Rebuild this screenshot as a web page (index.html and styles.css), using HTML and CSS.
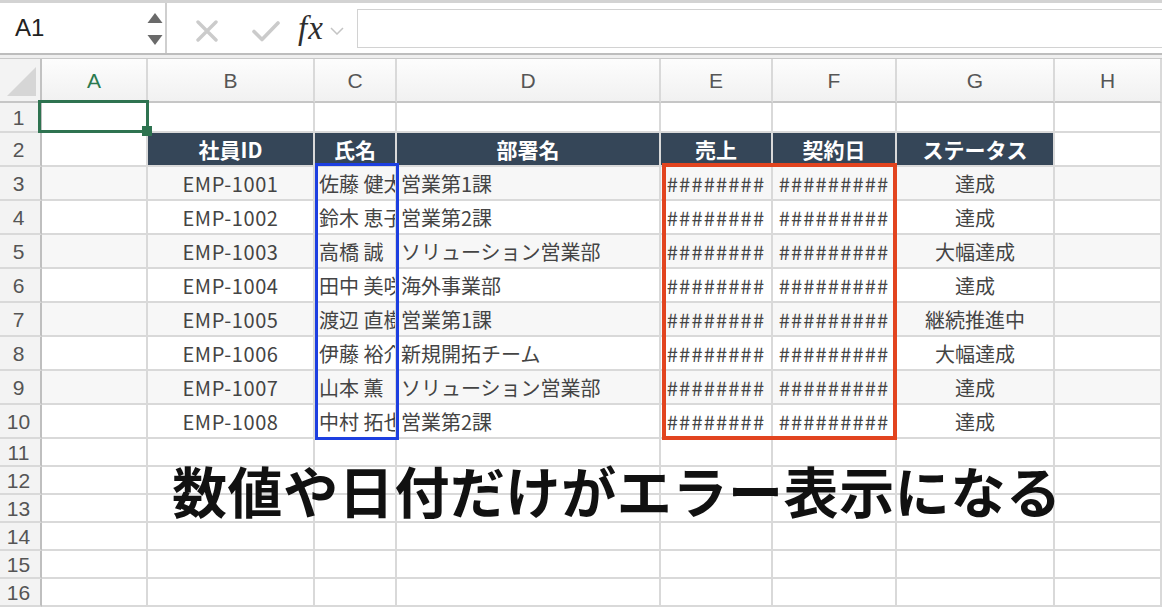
FILE: index.html
```html
<!DOCTYPE html>
<html lang="ja">
<head>
<meta charset="utf-8">
<title>Excel</title>
<link rel="stylesheet" href="styles.css">
</head>
<body>
<div class="page">
  <div class="toolbar">
    <div class="namebox">
      <span class="ref">A1</span>
      <svg class="spin" width="16" height="36" viewBox="0 0 16 36"><polygon points="8,1 15.5,11 0.5,11" fill="#6a6a6a"/><polygon points="0.5,23 15.5,23 8,33" fill="#6a6a6a"/></svg>
    </div>
    <div class="tools">
      <svg class="ico-x" width="22" height="22" viewBox="0 0 22 22"><path d="M2 2 L20 20 M20 2 L2 20" stroke="#cbcbcb" stroke-width="3.4" stroke-linecap="round"/></svg>
      <svg class="ico-ok" width="28" height="22" viewBox="0 0 28 22"><path d="M2 11.5 L10 19.5 L26 3" fill="none" stroke="#cbcbcb" stroke-width="3.6" stroke-linecap="round" stroke-linejoin="round"/></svg>
      <span class="fx">fx</span>
      <svg class="chev" width="14" height="8" viewBox="0 0 14 8"><path d="M1 1 L7 7 L13 1" fill="none" stroke="#c4c4c4" stroke-width="1.5"/></svg>
    </div>
    <div class="formula"></div>
  </div>
  <div class="band"></div>

  <div class="sheet">
    <div class="row h-head">
      <div class="c corner"><svg width="30" height="30" viewBox="0 0 30 30"><polygon points="29,0 29,29 0,29" fill="#d6d6d6"/></svg></div>
      <div class="c ch sel">A</div><div class="c ch">B</div><div class="c ch">C</div><div class="c ch">D</div><div class="c ch">E</div><div class="c ch">F</div><div class="c ch">G</div><div class="c ch">H</div>
    </div>
    <div class="row h30">
      <div class="c rh">1</div><div class="c"></div><div class="c"></div><div class="c"></div><div class="c"></div><div class="c"></div><div class="c"></div><div class="c"></div><div class="c"></div>
    </div>
    <div class="row h34">
      <div class="c rh">2</div><div class="c"></div>
      <div class="c th">社員ID</div><div class="c th">氏名</div><div class="c th">部署名</div><div class="c th">売上</div><div class="c th">契約日</div><div class="c th">ステータス</div>
      <div class="c"></div>
    </div>

    <div class="row h34 odd">
      <div class="c rh">3</div><div class="c"></div>
      <div class="c td ctr id">EMP-1001</div><div class="c td lft">佐藤 健太</div><div class="c td lft">営業第1課</div><div class="c td ctr hash">########</div><div class="c td ctr hash">#########</div><div class="c td ctr">達成</div>
      <div class="c"></div>
    </div>
    <div class="row h34">
      <div class="c rh">4</div><div class="c"></div>
      <div class="c td ctr id">EMP-1002</div><div class="c td lft">鈴木 恵子</div><div class="c td lft">営業第2課</div><div class="c td ctr hash">########</div><div class="c td ctr hash">#########</div><div class="c td ctr">達成</div>
      <div class="c"></div>
    </div>
    <div class="row h34 odd">
      <div class="c rh">5</div><div class="c"></div>
      <div class="c td ctr id">EMP-1003</div><div class="c td lft">高橋 誠</div><div class="c td lft">ソリューション営業部</div><div class="c td ctr hash">########</div><div class="c td ctr hash">#########</div><div class="c td ctr">大幅達成</div>
      <div class="c"></div>
    </div>
    <div class="row h34">
      <div class="c rh">6</div><div class="c"></div>
      <div class="c td ctr id">EMP-1004</div><div class="c td lft">田中 美咲</div><div class="c td lft">海外事業部</div><div class="c td ctr hash">########</div><div class="c td ctr hash">#########</div><div class="c td ctr">達成</div>
      <div class="c"></div>
    </div>
    <div class="row h34 odd">
      <div class="c rh">7</div><div class="c"></div>
      <div class="c td ctr id">EMP-1005</div><div class="c td lft">渡辺 直樹</div><div class="c td lft">営業第1課</div><div class="c td ctr hash">########</div><div class="c td ctr hash">#########</div><div class="c td ctr">継続推進中</div>
      <div class="c"></div>
    </div>
    <div class="row h34">
      <div class="c rh">8</div><div class="c"></div>
      <div class="c td ctr id">EMP-1006</div><div class="c td lft">伊藤 裕介</div><div class="c td lft">新規開拓チーム</div><div class="c td ctr hash">########</div><div class="c td ctr hash">#########</div><div class="c td ctr">大幅達成</div>
      <div class="c"></div>
    </div>
    <div class="row h34 odd">
      <div class="c rh">9</div><div class="c"></div>
      <div class="c td ctr id">EMP-1007</div><div class="c td lft">山本 薫</div><div class="c td lft">ソリューション営業部</div><div class="c td ctr hash">########</div><div class="c td ctr hash">#########</div><div class="c td ctr">達成</div>
      <div class="c"></div>
    </div>
    <div class="row h34">
      <div class="c rh">10</div><div class="c"></div>
      <div class="c td ctr id">EMP-1008</div><div class="c td lft">中村 拓也</div><div class="c td lft">営業第2課</div><div class="c td ctr hash">########</div><div class="c td ctr hash">#########</div><div class="c td ctr">達成</div>
      <div class="c"></div>
    </div>

    <div class="row h28"><div class="c rh">11</div><div class="c"></div><div class="c"></div><div class="c"></div><div class="c"></div><div class="c"></div><div class="c"></div><div class="c"></div><div class="c"></div></div>
    <div class="row h28"><div class="c rh">12</div><div class="c"></div><div class="c"></div><div class="c"></div><div class="c"></div><div class="c"></div><div class="c"></div><div class="c"></div><div class="c"></div></div>
    <div class="row h28"><div class="c rh">13</div><div class="c"></div><div class="c"></div><div class="c"></div><div class="c"></div><div class="c"></div><div class="c"></div><div class="c"></div><div class="c"></div></div>
    <div class="row h28"><div class="c rh">14</div><div class="c"></div><div class="c"></div><div class="c"></div><div class="c"></div><div class="c"></div><div class="c"></div><div class="c"></div><div class="c"></div></div>
    <div class="row h28"><div class="c rh">15</div><div class="c"></div><div class="c"></div><div class="c"></div><div class="c"></div><div class="c"></div><div class="c"></div><div class="c"></div><div class="c"></div></div>
    <div class="row h28"><div class="c rh">16</div><div class="c"></div><div class="c"></div><div class="c"></div><div class="c"></div><div class="c"></div><div class="c"></div><div class="c"></div><div class="c"></div></div>
  </div>

  <div class="selbox"></div>
  <div class="handle"></div>
  <div class="mark-blue"></div>
  <div class="mark-red"></div>
  <div class="caption">数値や日付だけがエラー表示になる</div>
</div>
</body>
</html>
```

FILE: styles.css
```css
* { box-sizing: border-box; }
html, body { margin: 0; padding: 0; }
body {
  width: 1162px;
  height: 608px;
  overflow: hidden;
  background: #ffffff;
  font-family: "Noto Sans CJK JP", "Noto Sans", sans-serif;
}
.page { position: relative; width: 1162px; height: 608px; }

/* toolbar */
.toolbar {
  height: 55px;
  display: flex;
  border-top: 3px solid #d3d3d3;
  border-bottom: 2px solid #bdbdbd;
  background: #ffffff;
}
.namebox {
  width: 167px;
  border-right: 2px solid #cfcfcf;
  display: flex;
  align-items: center;
  justify-content: space-between;
  padding: 0 2px 0 15px;
}
.ref {
  font-family: "Liberation Sans", Arial, sans-serif;
  font-size: 24px;
  color: #222222;
}
.spin { margin-top: 3px; }
.tools {
  width: 190px;
  display: flex;
  align-items: center;
  padding-left: 29px;
}
.ico-x { margin-top: 6px; }
.ico-ok { margin-left: 34px; margin-top: 6px; }
.fx {
  margin-left: 18px;
  font-family: "Liberation Serif", "Times New Roman", serif;
  font-style: italic;
  font-size: 33px;
  color: #2e2e2e;
  letter-spacing: 1px;
  margin-top: 0;
}
.chev { margin-left: 6px; margin-top: 5px; }
.formula {
  flex: 1;
  margin: 6px 0 5px 0;
  border: 1px solid #d2d2d2;
  border-right: none;
}
.band {
  height: 4px;
  background: #efefef;
  border-bottom: 1px solid #c9c9c9;
}

/* sheet grid */
.row {
  display: grid;
  grid-template-columns: 42px 106px 167px 82px 264px 112px 124px 158px 107px;
}
.h-head { height: 44px; }
.h30 { height: 30px; }
.h34 { height: 34px; }
.h28 { height: 28px; }

.c {
  border-right: 2px solid #d9d9d9;
  border-bottom: 2px solid #d9d9d9;
  display: flex;
  align-items: center;
  overflow: hidden;
  white-space: nowrap;
  background: #ffffff;
}
.odd .c { background: #f7f7f7; }

.corner {
  background: #f3f3f3;
  border-right: 2px solid #c2c2c2;
  border-bottom: 2px solid #c6c6c6;
  align-items: flex-end;
  justify-content: flex-end;
  padding: 0 3px 4px 0;
}
.ch {
  justify-content: center;
  background: linear-gradient(#fdfdfd, #f1f1f1);
  border-bottom: 2px solid #c6c6c6;
  font-family: "Liberation Sans", Arial, sans-serif;
  font-size: 21px;
  color: #565656;
  padding-top: 2px;
}
.ch.sel { color: #2b7a4f; }

.rh, .odd .rh {
  background: #f3f3f3;
  border-right: 2px solid #bfbfbf;
  justify-content: center;
  font-family: "Liberation Sans", Arial, sans-serif;
  font-size: 21px;
  color: #555555;
  padding-right: 3px;
  padding-top: 2px;
}

.th {
  background: #354658;
  color: #ffffff;
  font-weight: 700;
  font-size: 21px;
  justify-content: center;
}
.td {
  font-size: 20px;
  color: #444444;
}
.id { letter-spacing: 0.6px; }
.ctr { justify-content: center; }
.lft { padding-left: 4px; }
.hash { letter-spacing: 1.2px; }

/* overlays */
.selbox {
  position: absolute;
  left: 38px;
  top: 100px;
  width: 111px;
  height: 33px;
  border: 3px solid #2e7350;
}
.handle {
  position: absolute;
  left: 142px;
  top: 126px;
  width: 10px;
  height: 10px;
  background: #2e7350;
}
.mark-blue {
  position: absolute;
  left: 315px;
  top: 163px;
  width: 84px;
  height: 277px;
  border: 3px solid #1d3fe0;
}
.mark-red {
  position: absolute;
  left: 662px;
  top: 163px;
  width: 235px;
  height: 277px;
  border: 4px solid #e2441f;
}
.caption {
  position: absolute;
  left: 172px;
  top: 462px;
  font-size: 55px;
  line-height: 55px;
  font-weight: 700;
  letter-spacing: 0.6px;
  color: #111111;
  white-space: nowrap;
}
```
